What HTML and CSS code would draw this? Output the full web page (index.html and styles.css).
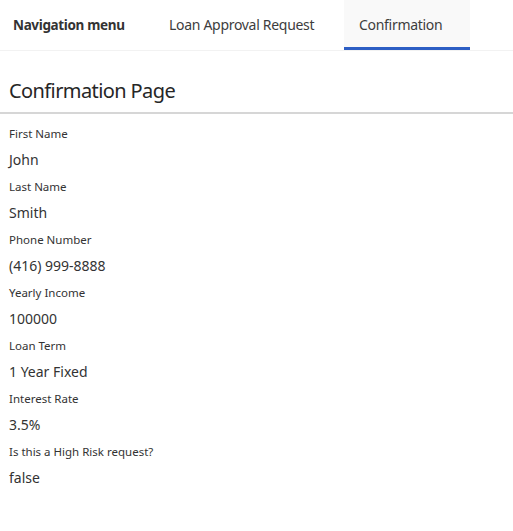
FILE: index.html
```html
<!DOCTYPE html>
<html>
<head>
<meta charset="utf-8">
<link rel="stylesheet" href="styles.css">
</head>
<body>
<header class="topbar">
  <div class="brand">Navigation menu</div>
  <nav class="tabs">
    <div class="tab">Loan Approval Request</div>
    <div class="tab active">Confirmation</div>
  </nav>
</header>
<main class="page">
  <h1 class="title">Confirmation Page</h1>
  <div class="fields">
    <div class="field"><div class="label">First Name</div><div class="value">John</div></div>
    <div class="field"><div class="label">Last Name</div><div class="value">Smith</div></div>
    <div class="field"><div class="label">Phone Number</div><div class="value">(416) 999-8888</div></div>
    <div class="field"><div class="label">Yearly Income</div><div class="value">100000</div></div>
    <div class="field"><div class="label">Loan Term</div><div class="value">1 Year Fixed</div></div>
    <div class="field"><div class="label">Interest Rate</div><div class="value">3.5%</div></div>
    <div class="field"><div class="label">Is this a High Risk request?</div><div class="value">false</div></div>
  </div>
</main>
</body>
</html>
```
FILE: styles.css
```css
* { box-sizing: border-box; }
body {
  margin: 0;
  font-family: "Noto Sans", "Open Sans", sans-serif;
  color: #262626;
  background: #fff;
}
.topbar {
  display: flex;
  align-items: stretch;
  height: 51px;
  border-bottom: 1px solid #f2f2f2;
  white-space: nowrap;
}
.brand {
  display: flex;
  align-items: center;
  flex: 0 0 155px;
  padding: 0 0 0 13px;
  font-weight: 700;
  font-size: 13.5px;
  color: #333;
  letter-spacing: -0.35px;
}
.tabs { display: flex; }
.tab {
  display: flex;
  align-items: center;
  flex: 0 0 auto;
  font-size: 14px;
  color: #3d3d3d;
  border-bottom: 3px solid transparent;
  padding-top: 1px;
  letter-spacing: -0.3px;
}
.tabs .tab:first-child { width: 189px; padding-left: 14px; }
.tab.active {
  width: 126px;
  padding-left: 15px;
  background: #f9f9f9;
  border-bottom-color: #2d5ec4;
}
.title {
  margin: 0;
  padding: 27px 9px 9px;
  font-size: 20px;
  font-weight: 400;
  line-height: 25px;
  color: #262626;
  letter-spacing: -0.6px;
  border-bottom: 2px solid #d6d6d6;
}
.fields { padding: 11px 9px 0; display: flex; flex-direction: column; }
.field { display: flex; flex-direction: column; height: 53px; }
.label { font-size: 11.5px; line-height: 18px; color: #333; }
.value { font-size: 14px; line-height: 18px; margin-top: 8px; color: #333; }
```
